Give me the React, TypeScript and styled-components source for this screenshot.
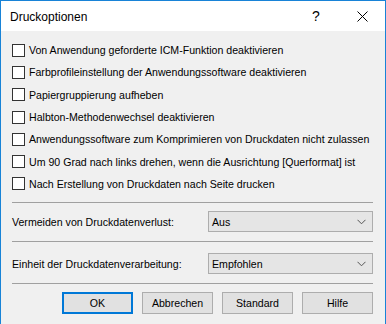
import styled, { createGlobalStyle } from 'styled-components';

const GlobalStyle = createGlobalStyle`
  html, body {
    margin: 0;
    padding: 0;
    background: #ffffff;
  }
  * {
    box-sizing: border-box;
  }
`;

const Window = styled.div`
  width: 386px;
  height: 324px;
  border: 1px solid #1883d7;
  border-bottom: none;
  background: #f0f0f0;
  font-family: 'Liberation Sans', Arial, sans-serif;
  font-size: 10.6px;
  color: #000;
  display: flex;
  flex-direction: column;
`;

const TitleBar = styled.div`
  height: 30px;
  background: #fff;
  display: flex;
  align-items: center;
  padding-left: 9px;
  flex-shrink: 0;
`;

const Title = styled.div`
  flex: 1;
  font-size: 12px;
  padding-top: 1px;
`;

const TitleButton = styled.div`
  width: 46px;
  height: 30px;
  display: flex;
  align-items: center;
  justify-content: center;
  font-size: 14px;
`;

const Body = styled.div`
  padding: 8px 12px 0 11px;
  display: flex;
  flex-direction: column;
`;

const CheckRow = styled.label`
  height: 22.3px;
  display: flex;
  align-items: center;
  gap: 4px;
  white-space: nowrap;
`;

const Box = styled.span`
  width: 13px;
  height: 13px;
  border: 1px solid #333;
  background: #fff;
  flex-shrink: 0;
`;

const Separator = styled.div<{ $top: number; $bottom: number }>`
  height: 1px;
  background: #a0a0a0;
  margin: ${(p) => `${p.$top}px 0 ${p.$bottom}px`};
`;

const FieldRow = styled.div`
  display: grid;
  grid-template-columns: 196px 1fr;
  align-items: center;
  height: 21px;
`;

const Select = styled.div`
  height: 21px;
  border: 1px solid #adadad;
  background: #e5e5e5;
  display: flex;
  align-items: center;
  padding: 0 6px 0 3px;
  justify-content: space-between;
`;

const Chevron = styled.svg`
  width: 9px;
  height: 6px;
`;

const ButtonBar = styled.div`
  display: flex;
  justify-content: flex-end;
  gap: 9px;
`;

const Button = styled.div<{ $default?: boolean }>`
  width: 71px;
  height: 22px;
  display: flex;
  align-items: center;
  justify-content: center;
  background: #e1e1e1;
  border: ${(p) => (p.$default ? '2px solid #0078d7' : '1px solid #adadad')};
`;

const options = [
  'Von Anwendung geforderte ICM-Funktion deaktivieren',
  'Farbprofileinstellung der Anwendungssoftware deaktivieren',
  'Papiergruppierung aufheben',
  'Halbton-Methodenwechsel deaktivieren',
  'Anwendungssoftware zum Komprimieren von Druckdaten nicht zulassen',
  'Um 90 Grad nach links drehen, wenn die Ausrichtung [Querformat] ist',
  'Nach Erstellung von Druckdaten nach Seite drucken',
];

const ChevronIcon = () => (
  <Chevron viewBox="0 0 9 6">
    <path d="M0.5 0.8 L4.5 4.8 L8.5 0.8" fill="none" stroke="#555" strokeWidth="1" />
  </Chevron>
);

export default function App() {
  return (
    <>
      <GlobalStyle />
      <Window>
        <TitleBar>
          <Title>Druckoptionen</Title>
          <TitleButton>?</TitleButton>
          <TitleButton>
            <svg width="11" height="11" viewBox="0 0 11 11">
              <path d="M0.5 0.5 L10.5 10.5 M10.5 0.5 L0.5 10.5" stroke="#000" strokeWidth="1" />
            </svg>
          </TitleButton>
        </TitleBar>
        <Body>
          {options.map((o) => (
            <CheckRow key={o}>
              <Box />
              {o}
            </CheckRow>
          ))}
          <Separator $top={7} $bottom={8} />
          <FieldRow>
            <span>Vermeiden von Druckdatenverlust:</span>
            <Select>
              Aus
              <ChevronIcon />
            </Select>
          </FieldRow>
          <Separator $top={9} $bottom={11} />
          <FieldRow>
            <span>Einheit der Druckdatenverarbeitung:</span>
            <Select>
              Empfohlen
              <ChevronIcon />
            </Select>
          </FieldRow>
          <Separator $top={9} $bottom={8} />
          <ButtonBar>
            <Button $default>OK</Button>
            <Button>Abbrechen</Button>
            <Button>Standard</Button>
            <Button>Hilfe</Button>
          </ButtonBar>
        </Body>
      </Window>
    </>
  );
}
